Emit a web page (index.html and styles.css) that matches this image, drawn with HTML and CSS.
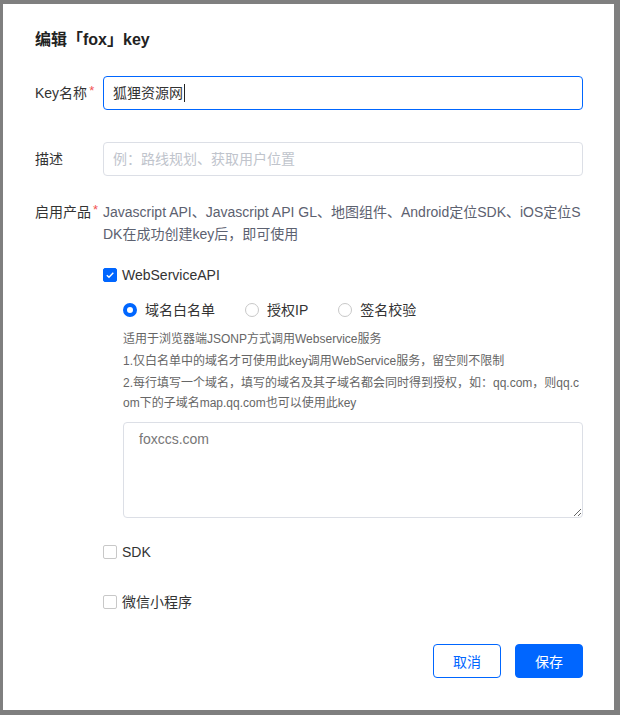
FILE: index.html
```html
<!DOCTYPE html>
<html lang="zh-CN">
<head>
  <meta charset="UTF-8">
  <title>编辑key</title>
  <link rel="stylesheet" href="styles.css">
</head>
<body>
  <div class="mask">
    <div class="dialog">
      <h2 class="title">编辑「fox」key</h2>

      <div class="row">
        <label class="label req">Key名称</label>
        <div class="field">
          <div class="input focus">狐狸资源网<span class="caret"></span></div>
        </div>
      </div>

      <div class="row row-desc">
        <label class="label">描述</label>
        <div class="field">
          <input class="input" type="text" placeholder="例：路线规划、获取用户位置">
        </div>
      </div>

      <div class="row row-prod">
        <label class="label req">启用产品</label>
        <div class="field">
          <p class="prod-tip">Javascript API、Javascript API GL、地图组件、Android定位SDK、iOS定位SDK在成功创建key后，即可使用</p>

          <div class="check checked check-ws">
            <span class="box">
              <svg width="10" height="10" viewBox="0 0 10 10"><path d="M1.8 5.2 L4 7.3 L8.3 2.8" fill="none" stroke="#fff" stroke-width="1.4"/></svg>
            </span>
            WebServiceAPI
          </div>

          <div class="sub">
            <div class="radios">
              <span class="radio on"><i></i>域名白名单</span>
              <span class="radio"><i></i>授权IP</span>
              <span class="radio"><i></i>签名校验</span>
            </div>
            <div class="help">
              <p>适用于浏览器端JSONP方式调用Webservice服务</p>
              <p>1.仅白名单中的域名才可使用此key调用WebService服务，留空则不限制</p>
              <p>2.每行填写一个域名，填写的域名及其子域名都会同时得到授权，如：qq.com，则qq.com下的子域名map.qq.com也可以使用此key</p>
            </div>
            <textarea class="area">foxccs.com</textarea>
          </div>

          <div class="check check-sdk"><span class="box"></span>SDK</div>
          <div class="check check-mini"><span class="box"></span>微信小程序</div>
        </div>
      </div>

      <div class="footer">
        <button class="btn btn-line">取消</button>
        <button class="btn btn-main">保存</button>
      </div>
    </div>
  </div>
</body>
</html>
```

FILE: styles.css
```css
* { margin:0; padding:0; box-sizing:border-box; }
body {
  font-family:"Liberation Sans", "Noto Sans CJK SC", sans-serif;
  font-size:14px; color:#333;
  background:#7f7f7f; height:715px; overflow:hidden;
}
/* подложка и окно */
.mask { padding:4px 0 0 3px; }
.dialog {
  width:611px; height:706px; background:#fff;
  padding:24px 31px 0 32px;
}
.title { font-size:16px; line-height:24px; font-weight:bold; color:#222; margin-bottom:24px; }

/* строки формы */
.row { display:flex; }
.row-desc { margin-top:32px; }
.row-prod { margin-top:25px; }
.label { width:68px; flex:none; line-height:34px; color:#333; white-space:nowrap; }
.row-prod .label { line-height:22px; }
.req::after { content:"*"; color:#f25353; font-size:13px; line-height:0; vertical-align:3px; margin-left:2px; }
.field { flex:1; min-width:0; }

.input {
  display:block; width:100%; height:34px; padding:0 9px;
  border:1px solid #dcdfe6; border-radius:4px;
  font:inherit; color:#333; line-height:32px; outline:none;
}
.input::placeholder { color:#c0c4cc; }
.input.focus { border-color:#0066ff; }
.caret { display:inline-block; width:1px; height:18px; background:#222; vertical-align:-4px; margin-left:1px; }

.prod-tip { line-height:22px; color:#5c6170; word-break:break-all; }

/* чекбоксы */
.check { display:flex; align-items:center; line-height:20px; color:#333; }
.check .box {
  width:14px; height:14px; margin-right:5px; flex:none;
  border:1px solid #c8c8c8; border-radius:2px;
  display:flex; align-items:center; justify-content:center;
}
.check.checked .box { background:#0066ff; border-color:#0066ff; }
.check-ws { margin-top:20px; }
.check-sdk { margin-top:24px; }
.check-mini { margin-top:30px; }

.sub { padding-left:20px; }
.radios { display:flex; margin-top:15px; line-height:20px; }
.radio { display:flex; align-items:center; margin-right:30px; }
.radio i {
  width:14px; height:14px; border-radius:50%; margin-right:8px;
  border:1px solid #c8c8c8;
}
.radio.on i { border:4.5px solid #0066ff; }

.help { margin-top:9px; font-size:12px; line-height:20px; color:#666; word-break:break-all; }
.help p + p { margin-top:2px; }

.area {
  display:block; width:100%; height:96px; margin-top:9px;
  border:1px solid #dcdfe6; border-radius:4px;
  padding:5px 15px; font:inherit; line-height:22px; color:#777; outline:none;
}

/* кнопки */
.footer { display:flex; justify-content:flex-end; gap:14px; margin-top:32px; }
.btn {
  width:68px; height:34px; border-radius:4px; font:inherit; font-size:14px; cursor:pointer;
}
.btn-line { background:#fff; color:#0066ff; border:1px solid #0066ff; }
.btn-main { background:#0066ff; color:#fff; border:1px solid #0066ff; }
```
